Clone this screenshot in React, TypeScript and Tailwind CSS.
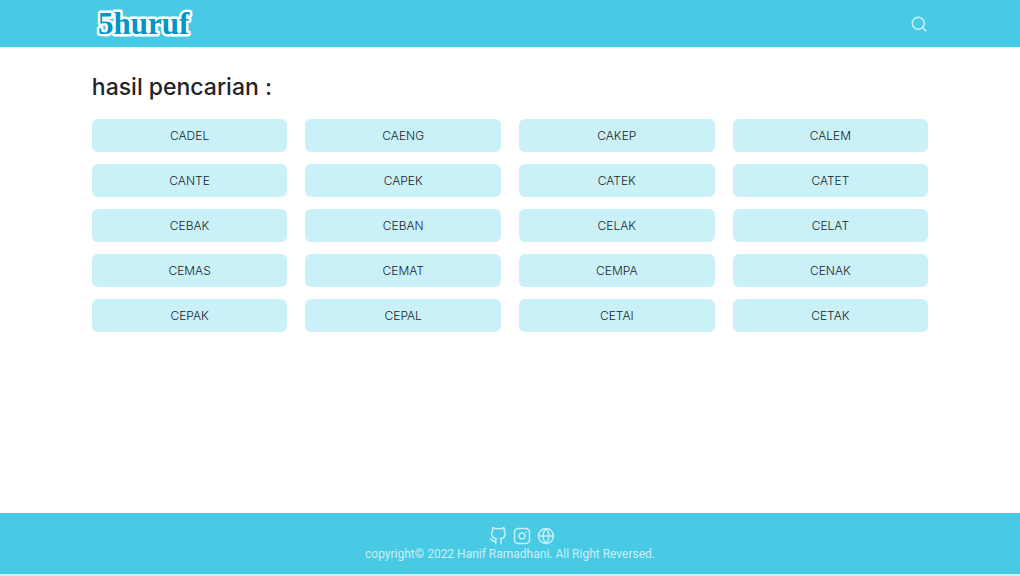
import { FiGithub, FiGlobe, FiInstagram, FiSearch } from "react-icons/fi";

const words = [
  "CADEL", "CAENG", "CAKEP", "CALEM",
  "CANTE", "CAPEK", "CATEK", "CATET",
  "CEBAK", "CEBAN", "CELAK", "CELAT",
  "CEMAS", "CEMAT", "CEMPA", "CENAK",
  "CEPAK", "CEPAL", "CETAI", "CETAK",
];

function Logo() {
  return (
    <a href="#" aria-label="5huruf" className="block">
      <svg width="104" height="36" viewBox="0 0 104 36" aria-hidden="true">
        <text
          x="6"
          y="28"
          fill="#0096c7"
          stroke="#ffffff"
          strokeWidth="5"
          strokeLinejoin="round"
          paintOrder="stroke"
          className="font-['Liberation_Serif',serif] text-[31px] font-bold"
        >
          5huruf
        </text>
      </svg>
    </a>
  );
}

export default function App() {
  return (
    <div className="flex min-h-screen flex-col bg-[#caf0f8] pb-0.5 font-['Inter',sans-serif] text-[#212529]">
      <header className="flex h-[47px] items-center justify-between bg-[#48cae4] px-[9%]">
        <Logo />
        <button type="button" aria-label="Search" className="text-[#caf0f8]">
          <FiSearch size={18} />
        </button>
      </header>

      <main className="flex-1 bg-white px-[9%] pt-6">
        <h1 className="text-[23px] leading-8 font-medium">hasil pencarian :</h1>
        <ul className="mt-4 grid grid-cols-4 gap-x-[18px] gap-y-3">
          {words.map((word) => (
            <li
              key={word}
              className="flex h-[33px] items-center justify-center rounded-md bg-[#caf0f8] text-xs font-light"
            >
              {word}
            </li>
          ))}
        </ul>
      </main>

      <footer className="flex h-[61px] flex-col items-center bg-[#48cae4] pt-3.5 text-[#caf0f8]">
        <div className="ml-6 flex gap-1.5">
          <a href="#" aria-label="GitHub"><FiGithub size={18} /></a>
          <a href="#" aria-label="Instagram"><FiInstagram size={18} /></a>
          <a href="#" aria-label="Website"><FiGlobe size={18} /></a>
        </div>
        <p className="font-['Roboto',sans-serif] text-xs leading-[18px]">copyright© 2022 Hanif Ramadhani. All Right Reversed.</p>
      </footer>
    </div>
  );
}
